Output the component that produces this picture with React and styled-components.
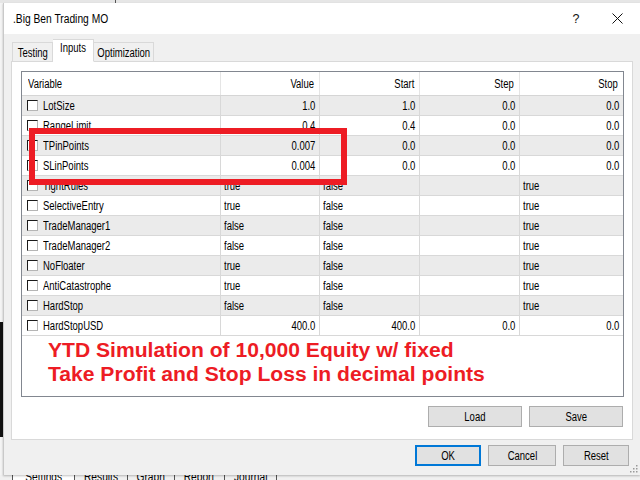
import React from 'react';
import styled, { createGlobalStyle } from 'styled-components';

const UI = `"Liberation Sans", Arial, sans-serif`;

const Global = createGlobalStyle`
  html, body { margin: 0; padding: 0; background: #f0f0f0; }
  body {
    width: 640px; height: 480px; overflow: hidden;
    font-family: ${UI};
  }
  * { box-sizing: border-box; }
`;

/* The dialog font in the picture is a narrow Windows face; squeeze Arial to match it. */
const Txt = styled.span`
  display: inline-block;
  white-space: nowrap;
  transform: scaleX(${p => p.$sx || 0.76});
  transform-origin: ${p => p.$origin || 'left'} center;
`;

const Desktop = styled.div`
  position: relative;
  width: 640px;
  height: 480px;
  overflow: hidden;
  display: grid;
  grid-template-columns: 3px 637px;
  grid-template-rows: 3px 472px 5px;
  background: #ececec;
`;

const TopStrip = styled.div`
  grid-column: 1 / 3;
  grid-row: 1;
  background: #e6e6e6;
  padding-left: 115px;
  &::after { content: ''; display: block; width: 1px; height: 3px; background: #555; }
`;

const LeftEdge = styled.div`
  grid-column: 1;
  grid-row: 2;
  background: #f4f4f4;
  padding-top: 319px;
  &::after { content: ''; display: block; width: 3px; height: 115px; background: #111; }
`;

const Dialog = styled.div`
  grid-column: 2;
  grid-row: 2;
  position: relative;
  display: flex;
  flex-direction: column;
  background: #f0f0f0;
  border-left: 1px solid #c9c9c9;
  box-shadow: 0 1px 2px rgba(0,0,0,0.25);
`;

const TitleBar = styled.div`
  height: 31px;
  flex: none;
  display: flex;
  align-items: center;
  background: #ffffff;
  padding-left: 9px;
  font-size: 12.5px;
  color: #000;
`;

const TitleText = styled.span`
  flex: 1;
`;

const HelpBtn = styled.span`
  width: 36px;
  text-align: center;
  font-size: 12.5px;
  color: #111;
`;

const CloseBtn = styled.span`
  width: 46px;
  height: 31px;
  display: flex;
  align-items: center;
  justify-content: center;
`;

const Body = styled.div`
  flex: 1;
  display: flex;
  flex-direction: column;
  padding: 6px 7px 9px 7px;
`;

const TabRow = styled.div`
  height: 22px;
  display: flex;
  align-items: flex-end;
  position: relative;
  z-index: 1;
  margin-bottom: -1px;
`;

const Tab = styled.div`
  width: ${p => p.$w}px;
  height: ${p => (p.$active ? 23 : 20)}px;
  margin-left: ${p => (p.$first ? 1 : 0)}px;
  border: 1px solid #d9d9d9;
  border-bottom: ${p => (p.$active ? '1px solid #ffffff' : '1px solid #d9d9d9')};
  border-left: ${p => (p.$noLeft ? 'none' : '1px solid #d9d9d9')};
  background: ${p => (p.$active ? '#ffffff' : '#f0f0f0')};
  font-size: 12.5px;
  color: #000;
  display: flex;
  justify-content: center;
  padding-top: ${p => (p.$active ? 1 : 3)}px;
  line-height: 14px;
`;

const Panel = styled.div`
  flex: 1;
  display: flex;
  flex-direction: column;
  background: #ffffff;
  border: 1px solid #d9d9d9;
  padding: 9px 8px 12px 9px;
`;

const ListBox = styled.div`
  height: 326px;
  flex: none;
  border: 1px solid #828790;
  background: #ffffff;
  display: flex;
  flex-direction: column;
  font-size: 12.5px;
  color: #000;
`;

const COLS = '199px 99px 100px 100px 103px';

const HeaderRow = styled.div`
  height: 24px;
  flex: none;
  display: grid;
  grid-template-columns: ${COLS};
  border-bottom: 1px solid #d5d5d5;
`;

const HeaderCell = styled.div`
  display: flex;
  align-items: center;
  justify-content: ${p => (p.$right ? 'flex-end' : 'flex-start')};
  padding: ${p => (p.$right ? '0 5px 0 0' : '0 0 0 6px')};
  border-right: ${p => (p.$last ? 'none' : '1px solid #e5e5e5')};
`;

const Row = styled.div`
  height: 20px;
  flex: none;
  display: grid;
  grid-template-columns: ${COLS};
  border-bottom: 1px solid #d8d8d8;
  background: ${p => (p.$alt ? '#ebebeb' : '#ffffff')};
`;

const Cell = styled.div`
  display: flex;
  align-items: center;
  justify-content: ${p => (p.$right ? 'flex-end' : 'flex-start')};
  padding: ${p => (p.$right ? '0 4px 0 0' : '0 0 0 3px')};
  border-right: ${p => (p.$last ? 'none' : '1px solid #d8d8d8')};
  white-space: nowrap;
  overflow: hidden;
`;

const NameCell = styled(Cell)`
  padding-left: 5px;
  gap: 5px;
`;

const Check = styled.span`
  width: 11px;
  height: 11px;
  flex: none;
  background: #ffffff;
  border-top: 1px solid #1a1a1a;
  border-left: 1px solid #1a1a1a;
  border-right: 1px solid #b5b5b5;
  border-bottom: 1px solid #b5b5b5;
`;

const Note = styled.div`
  padding: 2px 0 0 26px;
  font-family: "Liberation Sans", Arial, sans-serif;
  font-weight: bold;
  font-size: 21.1px;
  line-height: 24px;
  color: #ed1c24;
`;

const PanelButtons = styled.div`
  margin-top: 9px;
  display: flex;
  justify-content: flex-end;
  gap: 7px;
  padding-right: 1px;
`;

const Button = styled.button`
  width: ${p => p.$w}px;
  height: 21px;
  margin: 0;
  padding: 0;
  background: #e1e1e1;
  border: ${p => (p.$default ? '2px solid #0078d7' : '1px solid #adadad')};
  font-family: ${UI};
  font-size: 12.5px;
  color: #000;
`;

const DialogButtons = styled.div`
  margin-top: 5px;
  display: flex;
  justify-content: flex-end;
  gap: 7px;
  padding-right: 4px;
`;

const Grip = styled.svg`
  position: absolute;
  right: 2px;
  bottom: 2px;
`;

const BottomStrip = styled.div`
  grid-column: 1 / 3;
  grid-row: 3;
  background: #f0f0f0;
  display: flex;
  align-items: flex-start;
  overflow: hidden;
  padding-left: 12px;
  font-size: 12px;
  line-height: 12px;
`;

const StripTab = styled.div`
  width: ${p => p.$w}px;
  height: 12px;
  flex: none;
  display: flex;
  justify-content: center;
  border-left: 1px solid #555;
  background: ${p => (p.$active ? '#ffffff' : '#f0f0f0')};
  margin-top: -4px;
  color: #000;
`;

const Highlight = styled.div`
  position: absolute;
  left: 29px;
  top: 128px;
  width: 318px;
  height: 57px;
  border: 6px solid #ed1c24;
  pointer-events: none;
`;

const rows = [
  ['LotSize', '1.0', '1.0', '0.0', '0.0', true],
  ['RangeLimit', '0.4', '0.4', '0.0', '0.0', true],
  ['TPinPoints', '0.007', '0.0', '0.0', '0.0', true],
  ['SLinPoints', '0.004', '0.0', '0.0', '0.0', true],
  ['TightRules', 'true', 'false', '', 'true', false],
  ['SelectiveEntry', 'true', 'false', '', 'true', false],
  ['TradeManager1', 'false', 'false', '', 'true', false],
  ['TradeManager2', 'false', 'false', '', 'true', false],
  ['NoFloater', 'true', 'false', '', 'true', false],
  ['AntiCatastrophe', 'true', 'false', '', 'true', false],
  ['HardStop', 'false', 'false', '', 'true', false],
  ['HardStopUSD', '400.0', '400.0', '0.0', '0.0', true],
];

const stripTabs = [
  ['Settings', 62, true],
  ['Results', 53],
  ['Graph', 47],
  ['Report', 50],
  ['Journal', 52],
];

export default function App() {
  return (
    <>
      <Global />
      <Desktop>
        <TopStrip />
        <LeftEdge />
        <Dialog>
          <TitleBar>
            <TitleText><Txt $sx={0.82}>.Big Ben Trading MO</Txt></TitleText>
            <HelpBtn>?</HelpBtn>
            <CloseBtn>
              <svg width="11" height="11" viewBox="0 0 11 11">
                <path d="M0.5 0.5 L10.5 10.5 M10.5 0.5 L0.5 10.5" stroke="#111" strokeWidth="1" fill="none" />
              </svg>
            </CloseBtn>
          </TitleBar>
          <Body>
            <TabRow>
              <Tab $w={41} $first><Txt $origin="center">Testing</Txt></Tab>
              <Tab $w={41} $active $noLeft><Txt $origin="center">Inputs</Txt></Tab>
              <Tab $w={60} $noLeft><Txt $origin="center">Optimization</Txt></Tab>
            </TabRow>
            <Panel>
              <ListBox>
                <HeaderRow>
                  <HeaderCell><Txt>Variable</Txt></HeaderCell>
                  <HeaderCell $right><Txt $origin="right">Value</Txt></HeaderCell>
                  <HeaderCell $right><Txt $origin="right">Start</Txt></HeaderCell>
                  <HeaderCell $right><Txt $origin="right">Step</Txt></HeaderCell>
                  <HeaderCell $right $last><Txt $origin="right">Stop</Txt></HeaderCell>
                </HeaderRow>
                {rows.map(([name, v, s, st, sp, num], i) => {
                  const o = num ? 'right' : 'left';
                  return (
                    <Row key={name} $alt={i % 2 === 0}>
                      <NameCell>
                        <Check />
                        <Txt>{name}</Txt>
                      </NameCell>
                      <Cell $right={num}><Txt $origin={o}>{v}</Txt></Cell>
                      <Cell $right={num}><Txt $origin={o}>{s}</Txt></Cell>
                      <Cell $right={num}><Txt $origin={o}>{st}</Txt></Cell>
                      <Cell $right={num} $last><Txt $origin={o}>{sp}</Txt></Cell>
                    </Row>
                  );
                })}
                <Note>
                  YTD Simulation of 10,000 Equity w/ fixed
                  <br />
                  Take Profit and Stop Loss in decimal points
                </Note>
              </ListBox>
              <PanelButtons>
                <Button $w={94}><Txt $origin="center">Load</Txt></Button>
                <Button $w={94}><Txt $origin="center">Save</Txt></Button>
              </PanelButtons>
            </Panel>
            <DialogButtons>
              <Button $w={66} $default><Txt $origin="center">OK</Txt></Button>
              <Button $w={68}><Txt $origin="center">Cancel</Txt></Button>
              <Button $w={66}><Txt $origin="center">Reset</Txt></Button>
            </DialogButtons>
          </Body>
          <Grip width="9" height="9" viewBox="0 0 9 9">
            <g fill="#9a9a9a">
              <rect x="7" y="1" width="1.5" height="1.5" />
              <rect x="4" y="4" width="1.5" height="1.5" />
              <rect x="7" y="4" width="1.5" height="1.5" />
              <rect x="1" y="7" width="1.5" height="1.5" />
              <rect x="4" y="7" width="1.5" height="1.5" />
              <rect x="7" y="7" width="1.5" height="1.5" />
            </g>
          </Grip>
        </Dialog>
        <BottomStrip>
          {stripTabs.map(([label, w, active]) => (
            <StripTab key={label} $w={w} $active={active}>
              <Txt $origin="center" $sx={0.85}>{label}</Txt>
            </StripTab>
          ))}
          <StripTab $w={1} />
        </BottomStrip>
        <Highlight />
      </Desktop>
    </>
  );
}
